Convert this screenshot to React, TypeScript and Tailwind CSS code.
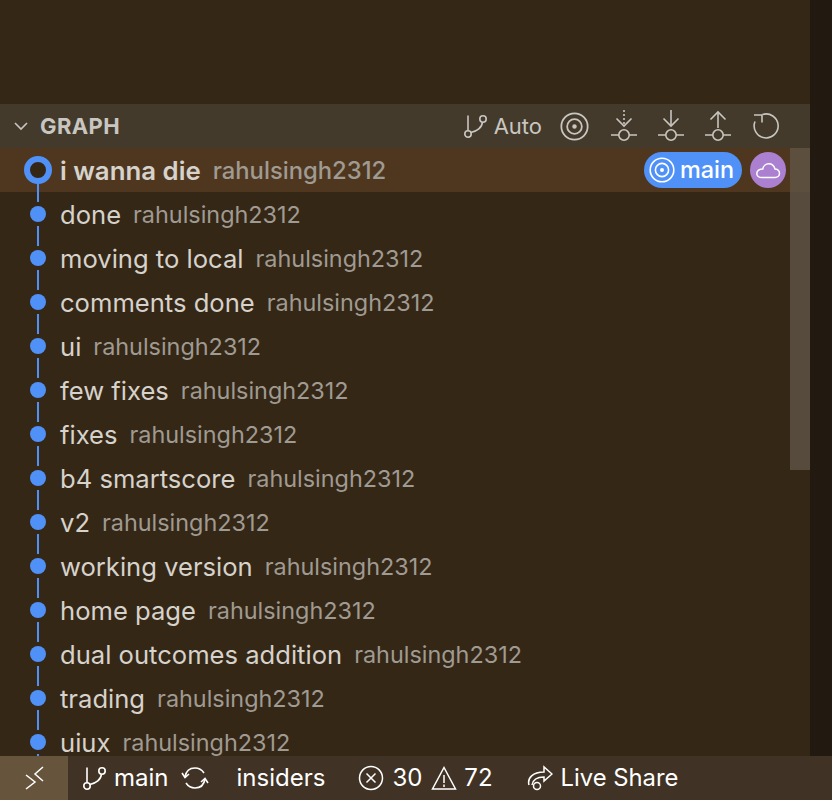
const commits = [
  "done",
  "moving to local",
  "comments done",
  "ui",
  "few fixes",
  "fixes",
  "b4 smartscore",
  "v2",
  "working version",
  "home page",
  "dual outcomes addition",
  "trading",
  "uiux",
];

function Ic({ w = 26, children, className = "" }: { w?: number; children: React.ReactNode; className?: string }) {
  return (
    <svg width={w} height={w} viewBox="0 0 26 26" fill="none" stroke="currentColor" strokeWidth="1.6" className={className}>
      {children}
    </svg>
  );
}

function Branch({ w = 26 }: { w?: number }) {
  return (
    <Ic w={w}>
      <circle cx="5" cy="21" r="3.2" />
      <circle cx="20" cy="6" r="3.2" />
      <path d="M5 2.5V17.8M7.8 19.5C14 18.5 19 14.5 19.5 9.2" />
    </Ic>
  );
}

function Target({ w = 29, className = "" }: { w?: number; className?: string }) {
  return (
    <Ic w={w} className={className}>
      <circle cx="13" cy="13" r="11.8" />
      <circle cx="13" cy="13" r="6.6" />
      <circle cx="13" cy="13" r="2" fill="currentColor" stroke="none" />
    </Ic>
  );
}

function Fetch({ kind }: { kind: "dashed" | "down" | "up" }) {
  return (
    <svg width="28" height="34" viewBox="0 0 28 34" fill="none" stroke="currentColor" strokeWidth="1.6">
      <circle cx="14" cy="26" r="5.2" />
      <path d="M1 26H8.8M19.2 26H27" />
      {kind === "dashed" && <path d="M14 1V16" strokeDasharray="2 2" />}
      {kind === "down" && <path d="M14 1V17" />}
      {kind === "up" && <path d="M14 3V19" />}
      {kind === "up" ? <path d="M6.5 10.5L14 3L21.5 10.5" /> : <path d="M6.5 9.5L14 17L21.5 9.5" />}
    </svg>
  );
}

function Lane({ head }: { head?: boolean }) {
  return (
    <svg width="24" height="44" viewBox="0 0 24 44" className="shrink-0 overflow-visible">
      {head ? (
        <>
          <path d="M14 34V44" stroke="#5091f8" strokeWidth="2" />
          <circle cx="14" cy="22" r="11" fill="#352716" stroke="#5091f8" strokeWidth="6" />
        </>
      ) : (
        <>
          <path d="M14 0V10M14 34V44" stroke="#5091f8" strokeWidth="2" />
          <circle cx="14" cy="22" r="8" fill="#5091f8" />
        </>
      )}
    </svg>
  );
}

export default function App() {
  return (
    <div
      className="h-[800px] w-[832px] flex flex-col overflow-hidden bg-[#221a10] text-[#d6d2cc]"
      style={{ fontFamily: "Inter, 'Noto Sans', sans-serif" }}
    >
      <div className="flex-1 min-h-0 flex">
        <div className="w-[810px] flex flex-col bg-[#352716]">
          <div className="h-[104px] shrink-0" />
          <div className="h-[44px] shrink-0 flex items-center bg-[#433a2b] pl-[11px] pr-[30px] text-[#c9c6c1]">
            <svg width="20" height="20" viewBox="0 0 20 20" fill="none" stroke="currentColor" strokeWidth="1.6">
              <path d="M4 7L10 13L16 7" />
            </svg>
            <span className="ml-[9px] text-[22px] font-bold tracking-[0.4px]">GRAPH</span>
            <div className="ml-auto flex items-center gap-[19px]">
              <div className="flex items-center gap-[5px] mr-[-1px]">
                <Branch />
                <span className="text-[22px]">Auto</span>
              </div>
              <Target className="mr-[2px]" />
              <Fetch kind="dashed" />
              <Fetch kind="down" />
              <Fetch kind="up" />
              <svg className="ml-[1px]" width="28" height="28" viewBox="0 0 28 28" fill="none" stroke="currentColor" strokeWidth="1.6">
                <path d="M10.5 2.5A12 12 0 1 1 3 9.5" />
                <path d="M2 3H10V10.5" />
              </svg>
            </div>
          </div>
          <div className="relative flex-1 min-h-0 overflow-hidden">
            <div className="h-[44px] flex items-center bg-[#4f371f] pl-[24px] pr-[24px]">
              <Lane head />
              <span className="ml-[12px] mt-[2px] text-[25.8px] font-semibold whitespace-nowrap">i wanna die</span>
              <span className="ml-[12px] mt-[2px] text-[23.8px] font-medium text-[#9f9a92] whitespace-nowrap">rahulsingh2312</span>
              <div className="ml-auto flex items-center gap-[8px]">
                <div className="w-[98px] h-[36px] flex items-center justify-between rounded-full bg-[#5091f8] pl-[5px] pr-[8px] text-white">
                  <Target w={26} />
                  <span className="text-[23.4px] font-medium">main</span>
                </div>
                <div className="w-[36px] h-[36px] flex items-center justify-center rounded-full bg-[#ab80d0] text-white">
                  <svg width="26" height="26" viewBox="0 0 26 26" fill="none" stroke="currentColor" strokeWidth="1.5">
                    <path d="M7 20.5H20C22.5 20.5 24.5 18.6 24.5 16.2C24.5 13.8 22.5 12 20 12C19 8.6 16.6 6.8 13.8 6.8C10.7 6.8 8.2 9 7.8 12C4.5 12 1.8 13.8 1.8 16.4C1.8 18.8 4 20.5 7 20.5Z" />
                  </svg>
                </div>
              </div>
            </div>
            {commits.map((c) => (
              <div key={c} className="h-[44px] flex items-center pl-[24px]">
                <Lane />
                <span className="ml-[12px] mt-[2px] text-[25.6px] whitespace-nowrap">{c}</span>
                <span className="ml-[12px] mt-[2px] text-[23.4px] text-[#9f9a92] whitespace-nowrap">rahulsingh2312</span>
              </div>
            ))}
            <div className="absolute right-0 top-0 w-[20px] h-[322px] bg-[#5f5546]/80" />
          </div>
        </div>
      </div>
      <div className="h-[44px] shrink-0 flex items-center bg-[#403325] text-white text-[24px]">
        <div className="w-[68px] h-full flex items-center justify-center bg-[#66553c]">
          <svg width="26" height="26" viewBox="0 0 26 26" fill="none" stroke="currentColor" strokeWidth="1.5">
            <path d="M5 10L14 17L5 24M22 2L14 9L22 16" />
          </svg>
        </div>
        <div className="ml-[14px] flex items-center gap-[6px]">
          <Branch />
          <span>main</span>
        </div>
        <svg className="ml-[12px]" width="28" height="28" viewBox="0 0 28 28" fill="none" stroke="currentColor" strokeWidth="1.6">
          <path d="M4 13C5 7 9 4 14 4C18 4 21 6 23 9M24 15C23 21 19 24 14 24C10 24 7 22 5 19" />
          <path d="M1 9L4 13.5L8 10M27 19L24 14.5L20 18" />
        </svg>
        <span className="ml-[28px]">insiders</span>
        <svg className="ml-[33px]" width="26" height="26" viewBox="0 0 26 26" fill="none" stroke="currentColor" strokeWidth="1.5">
          <circle cx="13" cy="13" r="11.5" />
          <path d="M8.5 8.5L17.5 17.5M17.5 8.5L8.5 17.5" />
        </svg>
        <span className="ml-[8px]">30</span>
        <svg className="ml-[9px]" width="26" height="26" viewBox="0 0 26 26" fill="none" stroke="currentColor" strokeWidth="1.5">
          <path d="M13 2.5L24.5 24H1.5Z" />
          <path d="M13 10V18M13 19.5V22" />
        </svg>
        <span className="ml-[7px]">72</span>
        <svg className="ml-[32px]" width="28" height="28" viewBox="0 0 28 28" fill="none" stroke="currentColor" strokeWidth="1.5">
          <circle cx="12" cy="22" r="3.5" />
          <path d="M4 21C2 14 8 8 19 8V3L27 10L19 17V13C12 13 8 15 7 21" />
        </svg>
        <span className="ml-[8px] text-[23.8px]">Live Share</span>
      </div>
    </div>
  );
}
